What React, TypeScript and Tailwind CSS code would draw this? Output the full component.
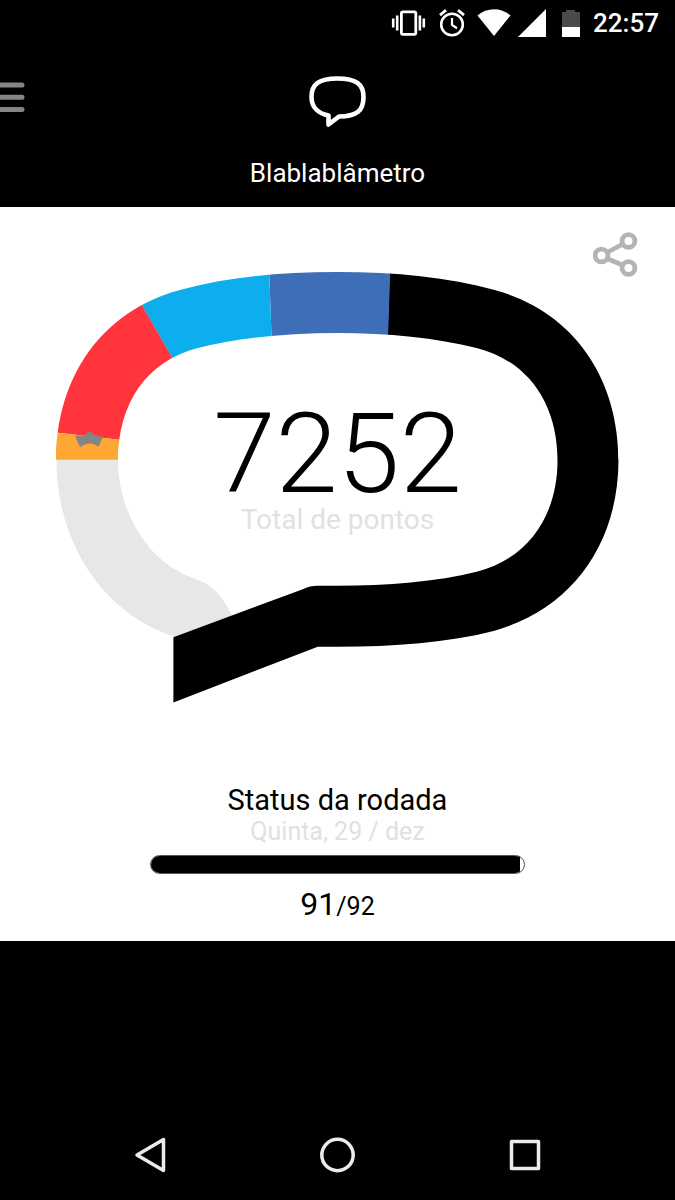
const RING_SEGMENTS = [
  { name: "black", fill: "#000000", points: "388,335 390,260 640,260 640,461 540,461" },
  { name: "blue", fill: "#3f6eb9", points: "269,260 391,260 388,345 272,345" },
  { name: "cyan", fill: "#0daeee", points: "136,295 136,260 269,260 272,345 174,361" },
  { name: "red", fill: "#ff343c", points: "50,432 50,260 116,260 177,366 128,441" },
  { name: "orange", fill: "#ffa733", points: "50,432 128,441 128,460 50,460" },
];

const StatusBar = () => (
  <div className="flex h-[46px] items-center justify-end gap-[11px] pr-4 text-white">
    <svg width="36" height="28" viewBox="0 0 36 28" fill="none" stroke="currentColor" strokeWidth="2.8">
      <rect x="10.4" y="2.9" width="14.4" height="22.4" rx="1.5" />
      <path d="M6.2 6.5v15M28.9 6.5v15M2.2 9.5v9M32.8 9.5v9" strokeWidth="2.6" />
    </svg>
    <svg width="28" height="28" viewBox="0 0 28 28" fill="none" stroke="currentColor" strokeWidth="2.6">
      <circle cx="14" cy="15.5" r="10.8" />
      <path d="M14 9v7l5 3.2" strokeWidth="2.2" />
      <path d="M2 6.2l6-5M26 6.2l-6-5" strokeWidth="2.8" />
    </svg>
    <div className="flex items-center gap-[7px]">
      <svg width="34" height="28" viewBox="0 0 34 28" fill="currentColor">
        <path d="M0.5 6.5C10-1.8 24-1.8 33.5 6.5L17 27z" />
      </svg>
      <svg width="28" height="28" viewBox="0 0 28 28" fill="currentColor">
        <path d="M28 0v28H0z" />
      </svg>
    </div>
    <svg width="22" height="28" viewBox="0 0 22 28" className="ml-[3px]" fill="currentColor">
      <path d="M2 3h4V1h9v2h5v15H2z" fill="#4a4a4a" />
      <path d="M2 18h18v10H2z" />
    </svg>
    <time className="text-[26px] leading-none font-medium">22:57</time>
  </div>
);

const Header = () => (
  <header className="grid grid-cols-[1fr_auto_1fr] items-start pt-7 pb-5 text-white">
    <button aria-label="Menu" className="mt-2 h-8 w-[26px] text-[#858585]">
      <svg width="26" height="32" viewBox="0 0 26 32" stroke="currentColor" strokeWidth="5" strokeLinecap="round">
        <path d="M-4 3h26M-4 15.2h26M-4 27.5h26" />
      </svg>
    </button>
    <svg
      width="60"
      height="54"
      viewBox="308 74 60 54"
      fill="none"
      stroke="currentColor"
      strokeWidth="4.6"
      strokeLinejoin="round"
    >
      <path d="M328.5 124.5V115.5C318 113.5 311.5 107 311.5 97C311.5 84 319 78.5 337.5 78.5C356 78.5 363.5 84 363.5 97C363.5 110.5 357 116.5 339 116.5z" />
    </svg>
    <h1 className="col-span-3 mt-[31px] text-center text-[26px] leading-7">Blablablâmetro</h1>
  </header>
);

const Gauge = () => (
  <svg viewBox="56 271 563 433" className="col-start-1 row-start-1 w-full" aria-hidden="true">
    <defs>
      <clipPath id="ring">
        <path
          clipRule="evenodd"
          d="M337.5 272C395 272 448 277 495 290C573 311 619 377 619 461H56C56 377 102 311 180 290C227 277 280 272 337.5 272z
             M337.5 333C388 333 437 338 477 348C528 361 558 403 558 461H118C118 403 147 361 198 348C238 338 287 333 337.5 333z"
        />
      </clipPath>
    </defs>
    <path
      fill="#e7e7e7"
      d="M56.5 459C56 540 100 612 174 637L200 640L232 616C225 600 214 585 195 579C150 564 118 515 118 459z"
    />
    <g clipPath="url(#ring)">
      {RING_SEGMENTS.map((segment) => (
        <polygon key={segment.name} points={segment.points} fill={segment.fill} />
      ))}
    </g>
    <path d="M619 460C619 543 573 609 495 631C448 643 395 647 337.5 647H318L173.5 703V637.5L303 589.5Q310 586 318 586H337.5C388 586 437 582 477 572C528 559 558 517 558 460z" />
    <path
      fill="#858585"
      d="M75 436L84.5 435.5L89.5 431L94.5 435.5L103 437L98.5 447Q89.5 440 80 447.5z"
    />
  </svg>
);

const ShareIcon = () => (
  <svg width="46" height="46" viewBox="593 231 46 46" fill="none" stroke="#b4b4b4" strokeWidth="4.8">
    <circle cx="601.5" cy="255.5" r="6.4" />
    <circle cx="628.5" cy="241" r="6.4" />
    <circle cx="628.5" cy="268" r="6.4" />
    <path d="M607 252.5L623 244M607 258.5L623 265.3" />
  </svg>
);

const RoundStatus = ({ done, total }: { done: number; total: number }) => (
  <section className="mt-20 flex flex-col items-center">
    <h2 id="round" className="text-[29px] leading-8">
      Status da rodada
    </h2>
    <p className="text-[25px] leading-8 text-[#e1e1e1]">Quinta, 29 / dez</p>
    <div
      role="progressbar"
      aria-labelledby="round"
      aria-valuenow={done}
      aria-valuemax={total}
      className="mt-[7px] h-[19px] w-5/9 overflow-hidden rounded-full border border-[#555]"
    >
      <div className="h-full bg-black" style={{ width: `${(done / total) * 100}%` }} />
    </div>
    <p className="mt-3 text-[32px] leading-9">
      {done}
      <span className="text-[25px]">/{total}</span>
    </p>
  </section>
);

const NavBar = () => (
  <nav className="grid grid-cols-[repeat(3,187px)] justify-center justify-items-center pb-6 text-[#ebebeb]">
    <button aria-label="Voltar">
      <svg width="42" height="42" viewBox="0 0 42 42" fill="none" stroke="currentColor" strokeWidth="3.5" strokeLinejoin="round">
        <path d="M33.5 5.5V36.5L7 21z" />
      </svg>
    </button>
    <button aria-label="Início">
      <svg width="42" height="42" viewBox="0 0 42 42" fill="none" stroke="currentColor" strokeWidth="3.5">
        <circle cx="20.5" cy="21" r="15.7" />
      </svg>
    </button>
    <button aria-label="Recentes">
      <svg width="42" height="42" viewBox="0 0 42 42" fill="none" stroke="currentColor" strokeWidth="3.5" strokeLinejoin="round">
        <rect x="7.5" y="7.5" width="27" height="27" />
      </svg>
    </button>
  </nav>
);

const App = () => {
  return (
    <div className="flex min-h-screen flex-col bg-black font-[Roboto,sans-serif]">
      <StatusBar />
      <Header />
      <main className="bg-white pb-4 text-black">
        <div className="flex h-16 items-start justify-end pt-6 pr-9">
          <button aria-label="Compartilhar">
            <ShareIcon />
          </button>
        </div>
        <div className="mx-auto grid w-5/6">
          <Gauge />
          <div className="col-start-1 row-start-1 mt-[132px] text-center">
            <p className="text-[112px] leading-[101px] font-light">7252</p>
            <p className="text-[28px] leading-8 text-[#e1e1e1]">Total de pontos</p>
          </div>
        </div>
        <RoundStatus done={91} total={92} />
      </main>
      <div className="mt-auto">
        <NavBar />
      </div>
    </div>
  );
};

export default App;
